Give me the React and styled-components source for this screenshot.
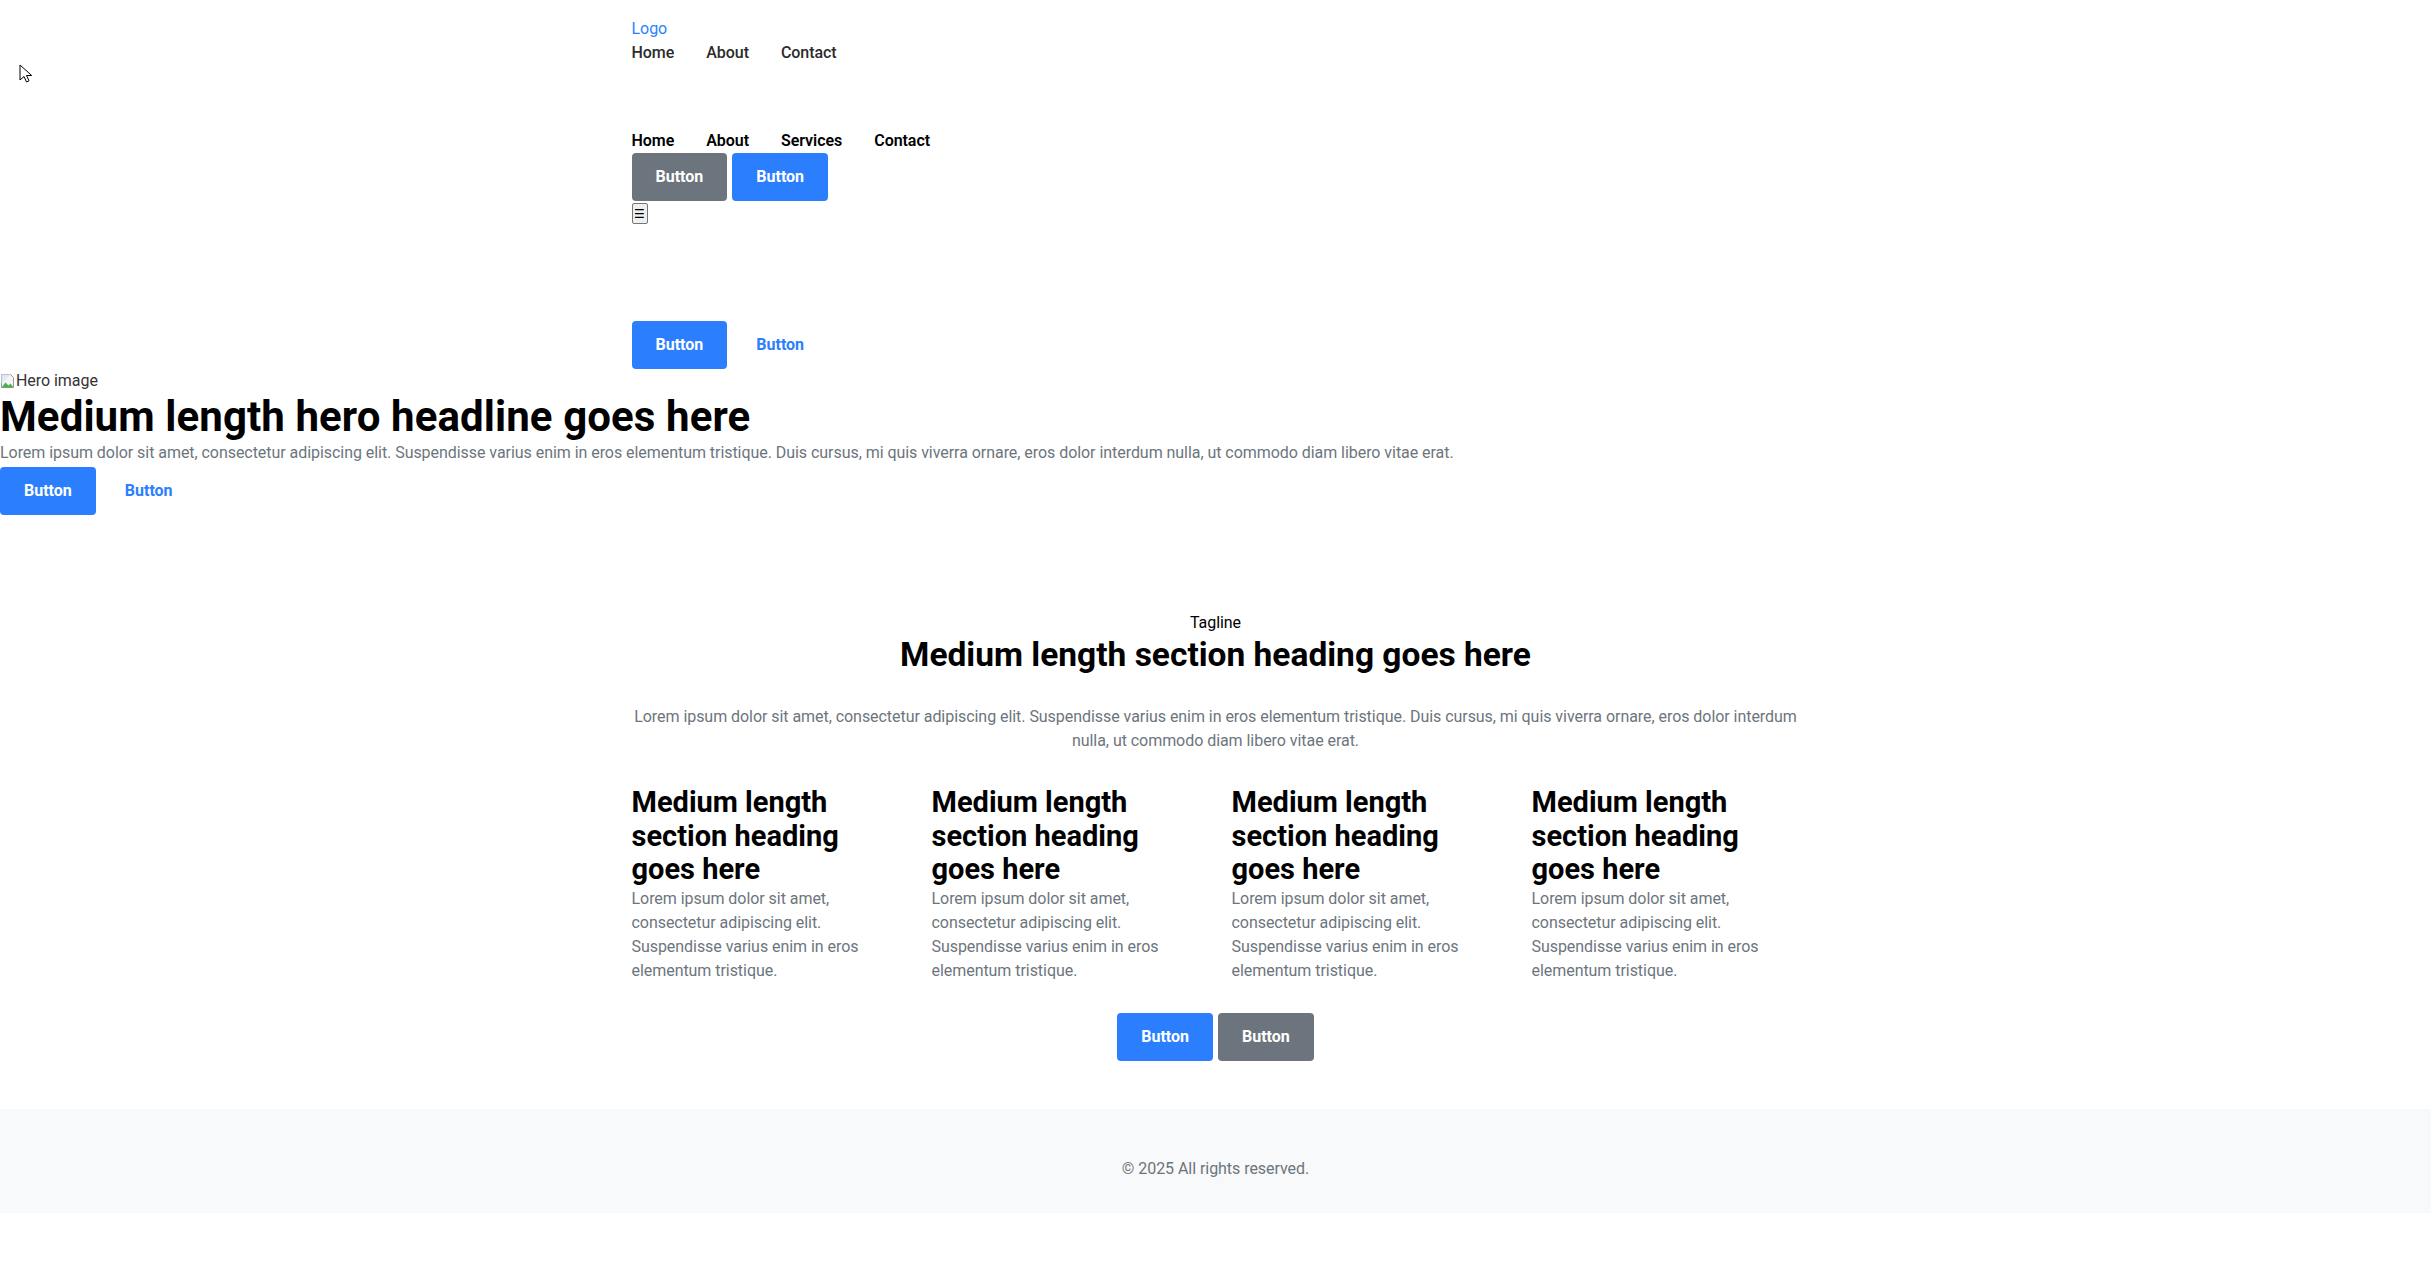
import styled, { createGlobalStyle, css } from 'styled-components';

const GlobalStyle = createGlobalStyle`
	* {
		box-sizing: border-box;
	}
	body {
		margin: 0;
		background: #ffffff;
		color: #212529;
		font-family: 'Segoe UI', Roboto, 'Noto Sans', sans-serif;
		font-size: 16px;
		line-height: 24px;
		letter-spacing: -0.05px;
	}
`;

const Page = styled.div`
	position: relative;
	min-height: 100vh;
`;

const Container = styled.div`
	max-width: 1200px;
	margin: 0 auto;
	padding: 0 16px;
`;

const Header = styled.header`
	padding-top: 17px;
`;

const Logo = styled.a`
	display: block;
	color: #2b7fff;
	text-decoration: none;
`;

const Nav = styled.nav`
	display: flex;
	gap: 32px;
`;

const NavLink = styled.a`
	color: ${(p) => (p.$strong ? '#000000' : '#2b2b2b')};
	font-weight: ${(p) => (p.$strong ? 600 : 500)};
	text-decoration: none;
`;

const SubNav = styled.div`
	margin-top: 64px;
`;

const ButtonRow = styled.div`
	display: flex;
	gap: 5px;
	justify-content: ${(p) => (p.$center ? 'center' : 'flex-start')};
	margin-top: ${(p) => p.$top || 0}px;
`;

const variants = {
	primary: css`
		background: #2b7fff;
		color: #ffffff;
	`,
	secondary: css`
		background: #6c757d;
		color: #ffffff;
	`,
	link: css`
		background: transparent;
		color: #2b7fff;
	`,
};

const Button = styled.button`
	border: none;
	border-radius: 4px;
	padding: 12px 24px;
	font-family: inherit;
	font-size: 16px;
	font-weight: 700;
	line-height: 24px;
	cursor: pointer;
	${(p) => variants[p.$variant || 'primary']}
`;

const MenuToggle = styled.button`
	display: flex;
	align-items: center;
	justify-content: center;
	width: 16px;
	height: 21px;
	margin-top: 2px;
	padding: 0;
	border: 1px solid #767676;
	border-radius: 2px;
	background: #efefef;
	color: #000000;
	font-family: 'DejaVu Sans', sans-serif;
	font-size: 12px;
	line-height: 1;
`;

const Hero = styled.section`
	padding: 0;
`;

const HeroImage = styled.div`
	display: flex;
	align-items: center;
	color: #333333;
	height: 24px;
`;

const HeroTitle = styled.h1`
	margin: 0;
	color: #000000;
	font-size: 42px;
	font-weight: 700;
	line-height: 48px;
	letter-spacing: 0.1px;
`;

const Text = styled.p`
	margin: ${(p) => p.$top || 0}px 0 0;
	color: #6c757d;
	text-align: ${(p) => (p.$center ? 'center' : 'left')};
`;

const Features = styled.section`
	padding: 96px 0 48px;
`;

const Tagline = styled.p`
	margin: 0;
	color: #000000;
	text-align: center;
`;

const SectionTitle = styled.h2`
	margin: 1px 0 0;
	color: #000000;
	font-size: 33.5px;
	font-weight: 700;
	line-height: 38px;
	letter-spacing: 0;
	text-align: center;
`;

const Grid = styled.div`
	display: grid;
	grid-template-columns: repeat(4, 1fr);
	gap: 32px;
	margin-top: 33px;
`;

const CardTitle = styled.h3`
	margin: 0;
	color: #000000;
	font-size: 29px;
	font-weight: 700;
	line-height: 33.6px;
	letter-spacing: 0;
`;

const Footer = styled.footer`
	background: #f8f9fa;
	padding: 48px 0 32px;
	color: #6c757d;
	text-align: center;
`;

const Cursor = styled.svg`
	position: absolute;
	left: 19px;
	top: 64px;
`;

const BrokenImage = () => (
	<svg width='16' height='16' viewBox='0 0 16 16'>
		<path d='M1.5 1.5h9l3 3v10h-12z' fill='#f4f4f4' stroke='#9a9a9a' />
		<path d='M1.5 14.5l4-5 3 3 2-2 3 4z' fill='#4caf50' />
		<path d='M1.5 1.5h9l-9 9z' fill='#dfe9f5' />
	</svg>
);

const columns = [1, 2, 3, 4];

const App = () => {
	return (
		<Page>
			<GlobalStyle />
			<Cursor width='13' height='20' viewBox='0 0 13 20'>
				<path d='M1 1v15l4-3.5 2.5 5.5 2.5-1.2-2.5-5.3h5.2z' fill='#ffffff' stroke='#000000' strokeWidth='1' />
			</Cursor>

			<Header>
				<Container>
					<Logo href='#'>Logo</Logo>
					<Nav>
						<NavLink href='#'>Home</NavLink>
						<NavLink href='#'>About</NavLink>
						<NavLink href='#'>Contact</NavLink>
					</Nav>

					<SubNav>
						<Nav>
							<NavLink $strong href='#'>Home</NavLink>
							<NavLink $strong href='#'>About</NavLink>
							<NavLink $strong href='#'>Services</NavLink>
							<NavLink $strong href='#'>Contact</NavLink>
						</Nav>
						<ButtonRow>
							<Button $variant='secondary'>Button</Button>
							<Button>Button</Button>
						</ButtonRow>
						<MenuToggle aria-label='Menu'>☰</MenuToggle>
					</SubNav>

					<ButtonRow $top={97}>
						<Button>Button</Button>
						<Button $variant='link'>Button</Button>
					</ButtonRow>
				</Container>
			</Header>

			<Hero>
				<HeroImage>
					<BrokenImage />
					<span>Hero image</span>
				</HeroImage>
				<HeroTitle>Medium length hero headline goes here</HeroTitle>
				<Text>
					Lorem ipsum dolor sit amet, consectetur adipiscing elit. Suspendisse varius enim in eros elementum
					tristique. Duis cursus, mi quis viverra ornare, eros dolor interdum nulla, ut commodo diam libero vitae
					erat.
				</Text>
				<ButtonRow $top={2}>
					<Button>Button</Button>
					<Button $variant='link'>Button</Button>
				</ButtonRow>
			</Hero>

			<Features>
				<Container>
					<Tagline>Tagline</Tagline>
					<SectionTitle>Medium length section heading goes here</SectionTitle>
					<Text $center $top={31}>
						Lorem ipsum dolor sit amet, consectetur adipiscing elit. Suspendisse varius enim in eros elementum
						tristique. Duis cursus, mi quis viverra ornare, eros dolor interdum nulla, ut commodo diam libero vitae
						erat.
					</Text>
					<Grid>
						{columns.map((n) => (
							<div key={n}>
								<CardTitle>Medium length section heading goes here</CardTitle>
								<Text>
									Lorem ipsum dolor sit amet, consectetur adipiscing elit. Suspendisse varius enim in eros
									elementum tristique.
								</Text>
							</div>
						))}
					</Grid>
					<ButtonRow $center $top={30}>
						<Button>Button</Button>
						<Button $variant='secondary'>Button</Button>
					</ButtonRow>
				</Container>
			</Features>

			<Footer>© 2025 All rights reserved.</Footer>
		</Page>
	);
};

export default App;
